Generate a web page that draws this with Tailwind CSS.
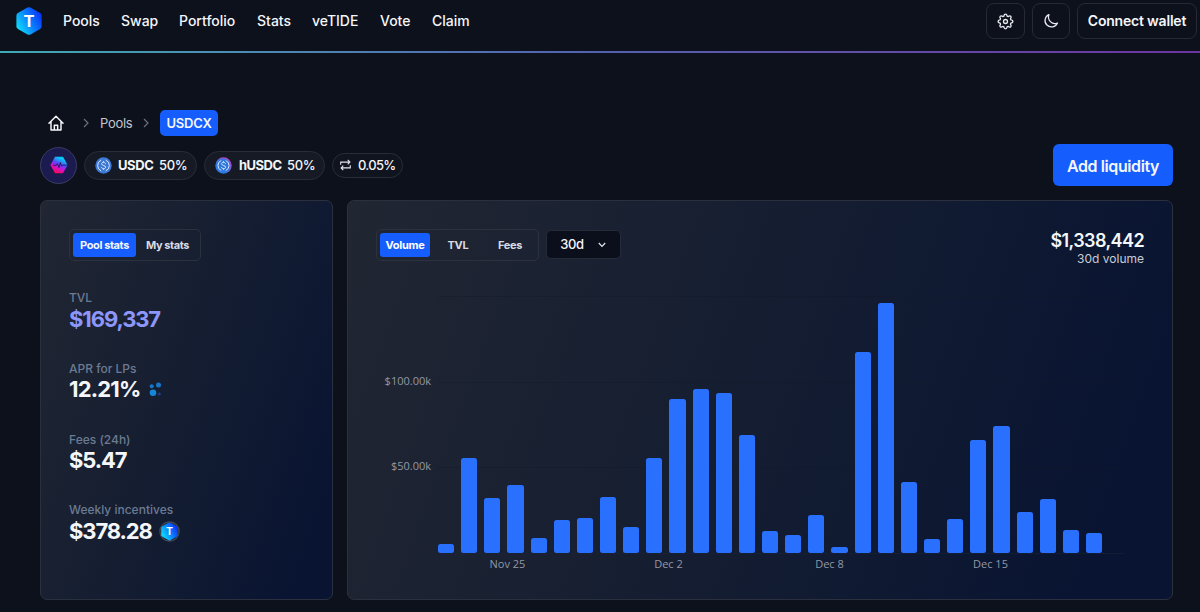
<!DOCTYPE html>
<html lang="en">
<head>
    <meta charset="UTF-8">
    <meta name="viewport" content="width=device-width, initial-scale=1.0">
    <title>USDCX Pool</title>
    <script src="https://cdn.jsdelivr.net/npm/@tailwindcss/browser@4"></script>
</head>
<body class="bg-[#0d111c] text-[#f4f6fa] font-['Inter',sans-serif] h-[612px] overflow-hidden">

    <!-- Navbar -->
    <header class="h-[51px] flex items-start pl-4 pr-[3px]">
        <svg class="w-[26px] h-7 mt-[7px]" viewBox="0 0 26 28">
            <defs>
                <linearGradient id="tide" x1="0" y1="0.8" x2="1" y2="0.2">
                    <stop offset="0" stop-color="#12e4fb"/>
                    <stop offset="0.5" stop-color="#0a84fc"/>
                    <stop offset="1" stop-color="#0a2cfa"/>
                </linearGradient>
            </defs>
            <path d="M11.5 0.6q1.5-.8 3 0l9.6 5.5q1.5.9 1.5 2.6v10.6q0 1.7-1.5 2.6l-9.6 5.5q-1.5.8-3 0l-9.6-5.5q-1.5-.9-1.5-2.6V8.700q0-1.700 1.500-2.600z" fill="url(#tide)"/>
            <text x="13" y="19.700" text-anchor="middle" font-family="Inter" font-weight="700" font-size="16.500" fill="#fff">T</text>
        </svg>
        <nav class="flex ml-[21px] mt-[11px] text-sm leading-5 font-medium">
            <a href="#" class="w-[58px]">Pools</a>
            <a href="#" class="w-[58px]">Swap</a>
            <a href="#" class="w-[78px]">Portfolio</a>
            <a href="#" class="w-[55px]">Stats</a>
            <a href="#" class="w-[68px]">veTIDE</a>
            <a href="#" class="w-[52px]">Vote</a>
            <a href="#">Claim</a>
        </nav>
        <div class="flex ml-auto mt-[3px] gap-[7px]">
            <button class="w-[39px] h-9 border border-[#262a36] rounded-lg flex items-center justify-center">
                <svg class="w-[17px] h-[17px]" viewBox="0 0 24 24" fill="none" stroke="#e8eaf0" stroke-width="1.900" stroke-linejoin="round">
                    <path d="M9.800 4.200Q10.200 1.500 12 1.500T14.200 4.200Q14.800 5 16 4.900 18.100 3.300 19.400 4.600T19.100 8Q19 9.200 19.800 9.800 22.500 10.200 22.500 12T19.800 14.200Q19 14.800 19.100 16 20.700 18.100 19.400 19.400T16 19.100Q14.800 19 14.200 19.800 13.800 22.500 12 22.500T9.800 19.800Q9.200 19 8 19.100 5.900 20.700 4.600 19.400T4.900 16Q5 14.800 4.200 14.200 1.500 13.800 1.500 12T4.200 9.800Q5 9.200 4.900 8 3.300 5.900 4.600 4.600T8 4.900Q9.200 5 9.800 4.200z"/>
                    <circle cx="12" cy="12" r="2.800"/>
                </svg>
            </button>
            <button class="w-[38px] h-9 border border-[#262a36] rounded-lg flex items-center justify-center">
                <svg class="w-4 h-4" viewBox="0 0 24 24" fill="none" stroke="#e8eaf0" stroke-width="1.900" stroke-linejoin="round">
                    <path d="M21.700 15A9.700 9.700 0 1 1 9 2.300 9.700 9.700 0 0 0 21.700 15z"/>
                </svg>
            </button>
            <button class="w-[120px] h-9 border border-[#262a36] rounded-lg text-sm font-semibold tracking-[-0.2px] whitespace-nowrap">Connect wallet</button>
        </div>
    </header>
    <div class="h-0.5 bg-linear-to-r from-[#3fa9b4] via-[#5360b0] to-[#6c34a0]"></div>

    <main class="pl-10 pr-[27px]">
        <!-- Breadcrumb -->
        <div class="mt-[57px] h-[26px] flex items-center text-[13px]">
            <svg class="w-4 h-4 ml-2" viewBox="0 0 24 24" fill="none" stroke="#f4f6fa" stroke-width="2.200" stroke-linejoin="round" stroke-linecap="round">
                <path d="M1.500 12.500 12 2l10.500 10.500M4.500 10v12.500h15V10M9.500 22v-6.500h5V22"/>
            </svg>
            <svg class="w-[6px] h-[10px] ml-[19px]" viewBox="0 0 6 10" fill="none" stroke="#6b7080" stroke-width="1.200"><path d="M1 1l4 4-4 4"/></svg>
            <a href="#" class="ml-[11px] w-[33px] pt-0.5 tracking-[-0.3px] text-[#c3c6d0]">Pools</a>
            <svg class="w-[6px] h-[10px] ml-[10px]" viewBox="0 0 6 10" fill="none" stroke="#6b7080" stroke-width="1.200"><path d="M1 1l4 4-4 4"/></svg>
            <span class="ml-[11px] w-[58px] h-[26px] pt-px rounded-[5px] bg-[#155dfc] font-semibold tracking-[-0.2px] flex items-center justify-center">USDCX</span>
        </div>

        <!-- Tokens and action -->
        <div class="mt-2 h-[42px] flex items-center text-[13px]">
            <div class="w-[37px] h-[37px] rounded-full bg-[#1b1b50] border border-[#3b3c60] flex items-center justify-center">
                <svg class="w-[18px] h-[18px]" viewBox="0 0 18 18">
                    <defs>
                        <linearGradient id="pulse" x1="0.750" y1="0" x2="0.250" y2="1">
                            <stop offset="0.150" stop-color="#08c4f8"/>
                            <stop offset="0.450" stop-color="#5a45f5"/>
                            <stop offset="0.650" stop-color="#d012d0"/>
                            <stop offset="0.950" stop-color="#fb0a50"/>
                        </linearGradient>
                    </defs>
                    <path d="M5 .8h8L17.600 9 13 17.200H5L.4 9z" fill="url(#pulse)"/>
                    <path d="M3 9.300h3.300l1-1.600 1.700 3.800L10.300 6.500l1.300 3.600.8-1H18" fill="none" stroke="#1b1b50" stroke-width="0.900"/>
                </svg>
            </div>
            <div class="ml-[7px] w-[113px] h-[29px] rounded-full bg-[#161a25] border border-[#292d39] flex items-center pl-[10px]">
                <svg class="w-[17px] h-[17px]" viewBox="0 0 17 17" fill="none" stroke="#d8e8ff">
                    <circle cx="8.500" cy="8.500" r="8.200" fill="#3c78d4" stroke="none"/>
                    <path d="M6.300 3.100a5.800 5.800 0 0 0 0 10.800M10.700 3.100a5.800 5.800 0 0 1 0 10.800"/>
                    <path d="M10.500 6.800c-.2-2-3.900-1.900-3.900 0 0 2 4 1.300 4 3.400 0 2-4 2-4.100-.1M8.500 4.200v1.200M8.500 11.600v1.200"/>
                </svg>
                <span class="ml-[6px] w-[41px] pt-px font-bold tracking-[-0.4px]">USDC</span>
                <span class="pt-px font-medium tracking-[-0.4px]">50%</span>
            </div>
            <div class="ml-[7px] w-[121px] h-[29px] rounded-full bg-[#161a25] border border-[#292d39] flex items-center pl-[10px]">
                <svg class="w-[17px] h-[17px]" viewBox="0 0 17 17" fill="none" stroke="#d8e8ff">
                    <defs>
                        <linearGradient id="ring" x1="0" y1="1" x2="1" y2="0">
                            <stop offset="0.300" stop-color="#2c7be8"/>
                            <stop offset="1" stop-color="#d636c0"/>
                        </linearGradient>
                    </defs>
                    <circle cx="8.500" cy="8.500" r="8.200" fill="url(#ring)" stroke="none"/>
                    <circle cx="8.500" cy="8.500" r="6.800" fill="#2f78dc" stroke="none"/>
                    <path d="M6.300 3.500a5.400 5.400 0 0 0 0 10M10.700 3.500a5.400 5.400 0 0 1 0 10"/>
                    <path d="M10.500 6.800c-.2-2-3.900-1.900-3.900 0 0 2 4 1.300 4 3.400 0 2-4 2-4.100-.1M8.500 4.200v1.200M8.500 11.600v1.200"/>
                </svg>
                <span class="ml-[7px] w-[48px] pt-px font-bold tracking-[-0.5px]">hUSDC</span>
                <span class="pt-px font-medium tracking-[-0.4px]">50%</span>
            </div>
            <div class="ml-[7px] w-[71px] h-[25px] rounded-full bg-[#10141f] border border-[#292d39] flex items-center pl-[7px]">
                <svg class="w-[11px] h-3" viewBox="0 0 11 12" fill="none" stroke="#e4e6ec" stroke-width="1.100">
                    <path d="M.7 5.800V3.100h9M7.700.9l2.200 2.200-2.200 2.200M10.300 6.200v2.700h-9M3.300 6.700 1.100 8.900l2.200 2.200"/>
                </svg>
                <span class="ml-[7px] pt-px font-medium tracking-[-0.7px]">0.05%</span>
            </div>
            <button class="ml-auto w-[120px] h-[42px] pt-0.5 rounded-md bg-[#155dfc] text-base font-semibold tracking-[-0.4px] whitespace-nowrap">Add liquidity</button>
        </div>

        <div class="mt-[14px] flex gap-[14px]">
            <!-- Pool stats -->
            <section class="w-[293px] h-[400px] shrink-0 rounded-[7px] border border-[#2a303e] bg-linear-110 from-[#212632] via-[#141d31] to-[#091432] to-90% pl-7 pt-7">
                <div class="w-[132px] h-8 rounded-[5px] border border-[#2c313e] flex items-center p-[3px] text-[11px] font-bold tracking-[-0.4px]">
                    <span class="w-[63px] h-6 rounded-[3px] bg-[#155dfc] flex items-center justify-center whitespace-nowrap">Pool stats</span>
                    <span class="flex-1 pl-[2px] text-center text-[#d8dbe3]">My stats</span>
                </div>
                <div class="mt-[29px] h-[71px]">
                    <p class="text-xs leading-4 font-medium text-[#6b7b93]">TVL</p>
                    <p class="text-[22px] leading-[26px] font-bold tracking-[-1.1px] text-[#8c96fb]">$169,337</p>
                </div>
                <div class="h-[71px]">
                    <p class="text-xs leading-4 font-medium text-[#6b7b93]">APR for LPs</p>
                    <div class="flex items-center">
                        <p class="text-[22px] leading-[25px] font-bold tracking-[-0.8px]">12.21%</p>
                        <svg class="ml-[8px] w-[13px] h-[15px]" viewBox="0 0 13 15">
                            <circle cx="2.700" cy="4.300" r="2" fill="#1776c8"/>
                            <circle cx="9.500" cy="3" r="2.500" fill="#1776c8"/>
                            <circle cx="4" cy="10.800" r="3.300" fill="#1686d8"/>
                            <circle cx="10.300" cy="12" r="1.600" fill="#203a86"/>
                        </svg>
                    </div>
                </div>
                <div class="h-[70px]">
                    <p class="text-xs leading-4 font-medium text-[#6b7b93]">Fees (24h)</p>
                    <p class="text-[22px] leading-6 font-bold tracking-[-1.1px]">$5.47</p>
                </div>
                <div>
                    <p class="text-xs leading-4 font-medium text-[#6b7b93]">Weekly incentives</p>
                    <div class="flex items-center">
                        <p class="text-[22px] leading-[26px] font-bold tracking-[-1.1px]">$378.28</p>
                        <svg class="ml-[7px] w-[21px] h-[21px]" viewBox="0 0 21 21">
                            <circle cx="10.500" cy="10.500" r="9.700" fill="#1b2940" stroke="#444b57" stroke-width="1.200"/>
                            <path d="M10.500 1.800 18.200 6.200v8.600l-7.700 4.400-7.700-4.400V6.200z" fill="url(#tide)" stroke="url(#tide)" stroke-linejoin="round"/>
                            <text x="10.500" y="14.300" text-anchor="middle" font-family="Inter" font-weight="700" font-size="10.500" fill="#fff">T</text>
                        </svg>
                    </div>
                </div>
            </section>

            <!-- Volume chart -->
            <section class="w-[826px] h-[400px] rounded-[7px] border border-[#2a303e] bg-linear-110 from-[#212632] via-[#141d31] to-[#091432] to-90% px-7 pt-7">
                <div class="flex h-[52px] items-start">
                    <div class="w-[163px] h-8 rounded-[5px] border border-[#2c313e] flex items-center p-[3px] text-[11px] font-bold tracking-[-0.3px] text-[#d8dbe3]">
                        <span class="w-[50px] h-6 rounded-[3px] bg-[#155dfc] text-white flex items-center justify-center">Volume</span>
                        <span class="w-[56px] text-center">TVL</span>
                        <span class="w-12 text-center">Fees</span>
                    </div>
                    <button class="ml-[7px] mt-px w-[75px] h-[29px] rounded-[5px] bg-[#0b0f1b] border border-[#262b38] flex items-center pl-[13px] text-[13px] font-medium">
                        <span class="w-6 pt-px tracking-[-0.3px]">30d</span>
                        <svg class="ml-[14px] w-2 h-[6px]" viewBox="0 0 8 6" fill="none" stroke="#e8eaf0" stroke-width="1.200"><path d="M.8 1 4 4.300 7.200 1"/></svg>
                    </button>
                    <div class="ml-auto text-right">
                        <p class="pt-px text-lg leading-[22px] font-semibold tracking-[-0.6px]">$1,338,442</p>
                        <p class="text-xs leading-[14px] text-[#c8ccd6]">30d volume</p>
                    </div>
                </div>
                <div class="flex h-[272px] font-['Open_Sans',sans-serif] text-[11px] leading-4 text-[#9298a5]">
                    <div class="w-[55px] pt-[92px] text-right">
                        <p class="h-[85px]">$100.00k</p>
                        <p>$50.00k</p>
                    </div>
                    <div class="relative ml-[7px] w-[686px]">
                        <div class="absolute left-0 right-0 top-[15px] h-px bg-[#111827]/40"></div>
                        <div class="absolute left-0 right-0 top-[101px] h-px bg-[#111827]/40"></div>
                        <div class="absolute left-0 right-0 top-[186px] h-px bg-[#111827]/40"></div>
                        <div class="absolute left-0 right-0 top-[272px] h-px bg-[#1a2338]/50"></div>
                        <div id="bars" class="relative h-[272.4px] flex items-end gap-[7px]"></div>
                    </div>
                </div>
                <div class="mt-[3px] ml-[51px] flex font-['Open_Sans',sans-serif] text-[11px] leading-4 text-[#9298a5] text-center">
                    <span class="w-[161px]">Nov 25</span>
                    <span class="w-[161px]">Dec 2</span>
                    <span class="w-[161px]">Dec 8</span>
                    <span class="w-[161px]">Dec 15</span>
                </div>
            </section>
        </div>
    </main>

    <script>
        // Daily bar heights in pixels
        const volumes = [9.7, 95.5, 55, 68.6, 15.4, 33.3, 35, 56, 26.6, 95, 154, 164, 160.5, 118.4, 22.7, 18.3, 38.1, 6.7, 201.3, 250.6, 71, 14.4, 34.4, 113.4, 127, 41, 54.8, 23.4, 20.2];
        const bars = document.getElementById("bars");

        volumes.forEach((height) => {
            const bar = document.createElement("div");
            bar.className = "w-[16.15px] shrink-0 rounded-[2.5px] bg-[#2970ff]";
            bar.style.height = `${height}px`;
            bars.appendChild(bar);
        });
    </script>
</body>
</html>
